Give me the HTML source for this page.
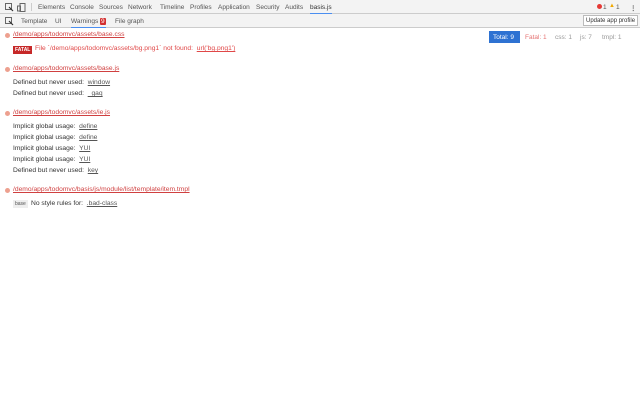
<!DOCTYPE html>
<html><head><meta charset="utf-8"><style>
*{margin:0;padding:0;box-sizing:border-box}
body{width:640px;height:400px;background:#fff;font-family:"Liberation Sans",sans-serif;font-size:6.5px;color:#333;position:relative;overflow:hidden}
.bar1{position:absolute;left:0;top:0;width:640px;height:14px;background:#f3f3f3;border-bottom:1px solid #ccc}
.bar2{position:absolute;left:0;top:14px;width:640px;height:14px;background:#f3f3f3;border-bottom:1px solid #ccc}
.t{position:absolute;top:4px;color:#555}
.sel{border-bottom:1.5px solid #4a8ef0}
.ab{position:absolute;white-space:nowrap}
.dot{position:absolute;width:5px;height:5px;border-radius:50%;background:#eda08f}
.lnk{color:#d04040;text-decoration:underline}
.u{color:#555;text-decoration:underline}
.m{font-size:6.7px}
</style></head><body>
<div class="bar1">
<svg class="ab" style="left:5px;top:3px" width="9" height="9"><rect x="0.5" y="0.5" width="6" height="6" fill="none" stroke="#666"/><path d="M4 4l4 4" stroke="#333" stroke-width="1.2"/></svg>
<svg class="ab" style="left:17px;top:3px" width="9" height="9"><rect x="3" y="0.5" width="5" height="8" fill="none" stroke="#666"/><rect x="0.5" y="3" width="3" height="5" fill="none" stroke="#666"/></svg>
<div class="ab" style="left:31px;top:3px;width:1px;height:8px;background:#ccc"></div>
<span class="t" style="left:38px">Elements</span>
<span class="t" style="left:70px">Console</span>
<span class="t" style="left:99px">Sources</span>
<span class="t" style="left:128px">Network</span>
<span class="t" style="left:160px">Timeline</span>
<span class="t" style="left:190px">Profiles</span>
<span class="t" style="left:218px">Application</span>
<span class="t" style="left:256px">Security</span>
<span class="t" style="left:285px">Audits</span>
<span class="t sel" style="left:310px;color:#333;padding-bottom:2px">basis.js</span>
<div class="ab" style="left:597px;top:4px;width:5px;height:5px;border-radius:50%;background:#e53935"></div>
<span class="t" style="left:603px">1</span>
<span class="ab" style="left:609px;top:3px;color:#f0a800;font-size:6px">▲</span>
<span class="t" style="left:616px">1</span>
<span class="t" style="left:630px;font-weight:bold">⋮</span>
</div>
<div class="bar2">
<svg class="ab" style="left:5px;top:3px" width="9" height="9"><rect x="0.5" y="0.5" width="6" height="6" fill="none" stroke="#666"/><path d="M4 4l4 4" stroke="#333" stroke-width="1.2"/></svg>
<span class="t" style="left:21px">Template</span>
<span class="t" style="left:55px">UI</span>
<span class="t sel" style="left:71px;padding-bottom:2px">Warnings <span style="background:#d32f2f;color:#fff;padding:0 1px;border-radius:1px">9</span></span>
<span class="t" style="left:115px">File graph</span>
<div class="ab" style="left:583px;top:1px;width:55px;height:11px;border:1px solid #bbb;background:#fff;font-size:6px;padding:2px 2px;color:#333">Update app profile</div>
</div>
<div class="ab" style="left:489px;top:31px;width:31px;height:12px;background:#2e72d2;color:#fff;font-size:6.5px;padding:2.5px 4px">Total: 9</div>
<span class="ab" style="left:525px;top:34px;color:#e57373">Fatal: 1</span>
<span class="ab" style="left:555px;top:34px;color:#999">css: 1</span>
<span class="ab" style="left:580px;top:34px;color:#999">js: 7</span>
<span class="ab" style="left:602px;top:34px;color:#999">tmpl: 1</span>

<div class="m">
<div class="dot" style="left:5px;top:33px"></div>
<span class="ab lnk" style="left:13px;top:31px">/demo/apps/todomvc/assets/base.css</span>
<span class="ab" style="left:13px;top:46px;background:#c62828;color:#fff;font-size:5px;padding:1px 2px;font-weight:bold">FATAL</span>
<span class="ab" style="left:35px;top:45px;color:#e04848">File `/demo/apps/todomvc/assets/bg.png1` not found: &nbsp;<span style="text-decoration:underline">url('bg.png1')</span></span>

<div class="dot" style="left:5px;top:67px"></div>
<span class="ab lnk" style="left:13px;top:65px">/demo/apps/todomvc/assets/base.js</span>
<span class="ab" style="left:13px;top:79px">Defined but never used: &nbsp;<span class="u">window</span></span>
<span class="ab" style="left:13px;top:90px">Defined but never used: &nbsp;<span class="u">_gaq</span></span>

<div class="dot" style="left:5px;top:111px"></div>
<span class="ab lnk" style="left:13px;top:109px">/demo/apps/todomvc/assets/ie.js</span>
<span class="ab" style="left:13px;top:123px">Implicit global usage: &nbsp;<span class="u">define</span></span>
<span class="ab" style="left:13px;top:134px">Implicit global usage: &nbsp;<span class="u">define</span></span>
<span class="ab" style="left:13px;top:145px">Implicit global usage: &nbsp;<span class="u">YUI</span></span>
<span class="ab" style="left:13px;top:156px">Implicit global usage: &nbsp;<span class="u">YUI</span></span>
<span class="ab" style="left:13px;top:167px">Defined but never used: &nbsp;<span class="u">key</span></span>

<div class="dot" style="left:5px;top:188px"></div>
<span class="ab lnk" style="left:13px;top:186px">/demo/apps/todomvc/basis/js/module/list/template/item.tmpl</span>
<span class="ab" style="left:13px;top:200px;background:#eee;font-size:5px;padding:1px 2px;color:#555">base</span>
<span class="ab" style="left:31px;top:200px">No style rules for: &nbsp;<span class="u">.bad-class</span></span>
</div>
</body></html>
